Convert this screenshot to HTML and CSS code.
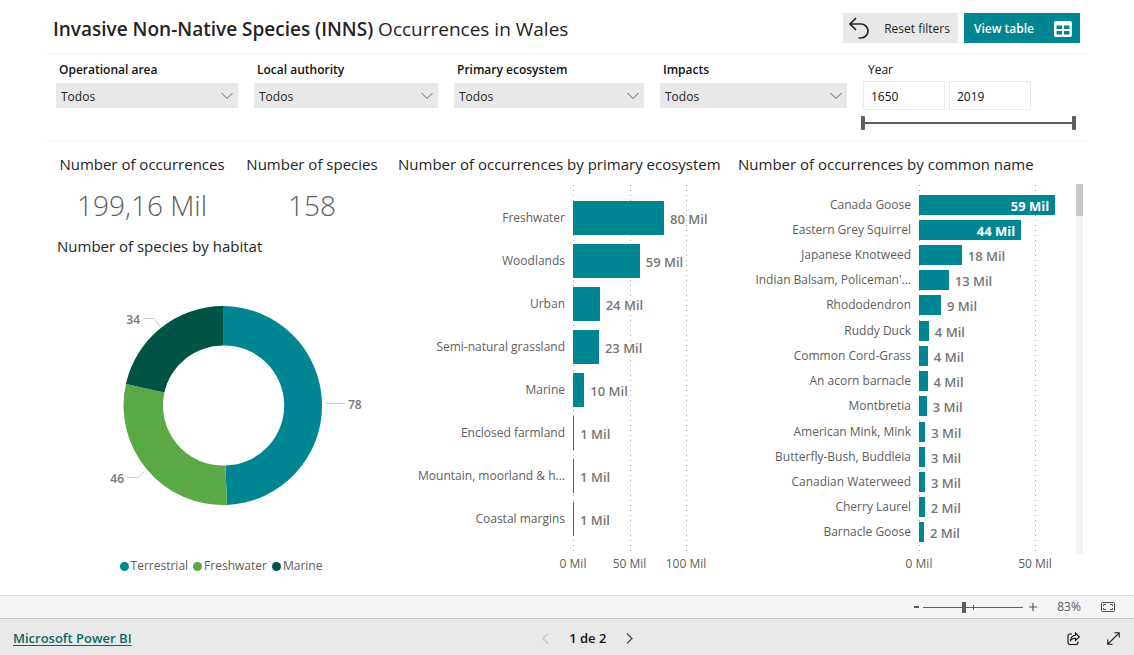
FILE: index.html
```html
<!DOCTYPE html>
<html lang="en">
<head>
<meta charset="utf-8">
<title>INNS Occurrences in Wales</title>
<link rel="stylesheet" href="styles.css">
</head>
<body>
<main class="report">
  <header class="header">
    <h1 class="title"><b>Invasive Non-Native Species (INNS)</b> Occurrences in Wales</h1>
    <button class="btn btn-reset" type="button">
      <svg width="22" height="24" viewBox="0 0 22 24" fill="none" stroke="#252423" stroke-width="1.7"><path d="M8 1 2 7l6 6M2 7h11a6.500 6.500 0 0 1 0 14H10.500"/></svg>
      Reset filters
    </button>
    <button class="btn btn-table" type="button">
      View table
      <svg width="18" height="16" viewBox="0 0 18 16"><rect width="18" height="16" rx="2" fill="#fff"/><path d="M2.500 4.500h5.500v3.500H2.500zM10 4.500h5.500v3.500H10zM2.500 10h5.500v3.500H2.500zM10 10h5.500v3.500H10z" fill="#008593"/></svg>
    </button>
  </header>

  <section class="filters">
    <div class="filter">
      <label for="area">Operational area</label>
      <div class="select"><select id="area"><option>Todos</option></select><svg class="chev warm" width="12" height="8" viewBox="0 0 12 8"><path d="M.5 1 6 6.500 11.500 1"/></svg></div>
    </div>
    <div class="filter">
      <label for="authority">Local authority</label>
      <div class="select"><select id="authority"><option>Todos</option></select><svg class="chev warm" width="12" height="8" viewBox="0 0 12 8"><path d="M.5 1 6 6.500 11.500 1"/></svg></div>
    </div>
    <div class="filter">
      <label for="ecosystem">Primary ecosystem</label>
      <div class="select"><select id="ecosystem"><option>Todos</option></select><svg class="chev" width="12" height="8" viewBox="0 0 12 8"><path d="M.5 1 6 6.500 11.500 1"/></svg></div>
    </div>
    <div class="filter">
      <label for="impacts">Impacts</label>
      <div class="select"><select id="impacts"><option>Todos</option></select><svg class="chev" width="12" height="8" viewBox="0 0 12 8"><path d="M.5 1 6 6.500 11.500 1"/></svg></div>
    </div>
    <div class="year">
      <label for="from">Year</label>
      <div class="year-inputs">
        <input id="from" type="text" value="1650">
        <input type="text" value="2019" aria-label="End year">
      </div>
      <div class="range">
        <input type="range" min="1650" max="2019" value="1650" aria-label="From">
        <input type="range" min="1650" max="2019" value="2019" aria-label="To">
      </div>
    </div>
  </section>

  <section class="visuals">
    <div class="summary">
      <div class="kpis">
        <div class="kpi"><h2>Number of occurrences</h2><p>199,16 Mil</p></div>
        <div class="kpi"><h2>Number of species</h2><p>158</p></div>
      </div>
      <h2 class="habitat-title">Number of species by habitat</h2>
      <svg class="donut" viewBox="0 0 344 280" role="img" aria-label="Number of species by habitat">
        <path fill="#008593" d="M177 36A99.500 99.500 0 0 1 181 234.900L179.400 195.500A60 60 0 0 0 177 75.500Z"/>
        <path fill="#5aa846" d="M181 234.900A99.500 99.500 0 0 1 79.900 113.900L118.400 122.500A60 60 0 0 0 179.400 195.500Z"/>
        <path fill="#005446" d="M79.900 113.900A99.500 99.500 0 0 1 177 36V75.500A60 60 0 0 0 118.400 122.500Z"/>
        <path class="leader" d="M97 48.500h11l6 8M279 133.500h20M81 207.500h11l7-7"/>
        <text x="94" y="54" text-anchor="end">34</text>
        <text x="302" y="139">78</text>
        <text x="78" y="213" text-anchor="end">46</text>
      </svg>
      <ul class="legend">
        <li><i class="dot teal"></i>Terrestrial</li>
        <li><i class="dot green"></i>Freshwater</li>
        <li><i class="dot dark"></i>Marine</li>
      </ul>
    </div>

    <div class="chart chart-eco">
      <h2>Number of occurrences by primary ecosystem</h2>
      <div class="plot">
        <div class="lines"><i></i><i></i><i></i></div>
        <div class="rows">
          <div class="row"><span class="name">Freshwater</span><span class="track"><i class="bar" style="width:58%"></i><b>80 Mil</b></span></div>
          <div class="row"><span class="name">Woodlands</span><span class="track"><i class="bar" style="width:42.500%"></i><b>59 Mil</b></span></div>
          <div class="row"><span class="name">Urban</span><span class="track"><i class="bar" style="width:17%"></i><b>24 Mil</b></span></div>
          <div class="row"><span class="name">Semi-natural grassland</span><span class="track"><i class="bar" style="width:16.500%"></i><b>23 Mil</b></span></div>
          <div class="row"><span class="name">Marine</span><span class="track"><i class="bar" style="width:7.200%"></i><b>10 Mil</b></span></div>
          <div class="row"><span class="name">Enclosed farmland</span><span class="track"><i class="bar" style="width:.8%"></i><b>1 Mil</b></span></div>
          <div class="row"><span class="name">Mountain, moorland &amp; h...</span><span class="track"><i class="bar" style="width:.7%"></i><b>1 Mil</b></span></div>
          <div class="row"><span class="name">Coastal margins</span><span class="track"><i class="bar" style="width:.6%"></i><b>1 Mil</b></span></div>
        </div>
      </div>
      <div class="axis"><span>0 Mil</span><span>50 Mil</span><span>100 Mil</span></div>
    </div>

    <div class="chart chart-name">
      <h2>Number of occurrences by common name</h2>
      <div class="scroller">
        <div class="plot">
          <div class="lines"><i></i><i></i></div>
          <div class="rows">
            <div class="row"><span class="name">Canada Goose</span><span class="track"><i class="bar" style="width:94%"><b>59 Mil</b></i></span></div>
            <div class="row"><span class="name">Eastern Grey Squirrel</span><span class="track"><i class="bar" style="width:70.500%"><b>44 Mil</b></i></span></div>
            <div class="row"><span class="name">Japanese Knotweed</span><span class="track"><i class="bar" style="width:29.500%"></i><b>18 Mil</b></span></div>
            <div class="row"><span class="name">Indian Balsam, Policeman'...</span><span class="track"><i class="bar" style="width:20.500%"></i><b>13 Mil</b></span></div>
            <div class="row"><span class="name">Rhododendron</span><span class="track"><i class="bar" style="width:15.200%"></i><b>9 Mil</b></span></div>
            <div class="row"><span class="name">Ruddy Duck</span><span class="track"><i class="bar" style="width:6.800%"></i><b>4 Mil</b></span></div>
            <div class="row"><span class="name">Common Cord-Grass</span><span class="track"><i class="bar" style="width:6.100%"></i><b>4 Mil</b></span></div>
            <div class="row"><span class="name">An acorn barnacle</span><span class="track"><i class="bar" style="width:5.900%"></i><b>4 Mil</b></span></div>
            <div class="row"><span class="name">Montbretia</span><span class="track"><i class="bar" style="width:5.300%"></i><b>3 Mil</b></span></div>
            <div class="row"><span class="name">American Mink, Mink</span><span class="track"><i class="bar" style="width:4.300%"></i><b>3 Mil</b></span></div>
            <div class="row"><span class="name">Butterfly-Bush, Buddleia</span><span class="track"><i class="bar" style="width:4.200%"></i><b>3 Mil</b></span></div>
            <div class="row"><span class="name">Canadian Waterweed</span><span class="track"><i class="bar" style="width:4.100%"></i><b>3 Mil</b></span></div>
            <div class="row"><span class="name">Cherry Laurel</span><span class="track"><i class="bar" style="width:4%"></i><b>2 Mil</b></span></div>
            <div class="row"><span class="name">Barnacle Goose</span><span class="track"><i class="bar" style="width:3.400%"></i><b>2 Mil</b></span></div>
          </div>
        </div>
        <div class="scrollbar"><i></i></div>
      </div>
      <div class="axis"><span>0 Mil</span><span>50 Mil</span></div>
    </div>
  </section>
</main>

<div class="zoombar">
  <button type="button" aria-label="Zoom out"><svg width="5" height="10" viewBox="0 0 5 10"><path d="M0 5h5" stroke="#555" stroke-width="2"/></svg></button>
  <input type="range" min="0" max="100" value="41" aria-label="Zoom">
  <button type="button" aria-label="Zoom in"><svg width="8" height="8" viewBox="0 0 8 8"><path d="M0 4h8M4 0v8" stroke="#555" stroke-width="1.200"/></svg></button>
  <span class="pct">83%</span>
  <button type="button" aria-label="Fit to page"><svg width="14" height="10" viewBox="0 0 14 10" fill="none" stroke="#555"><rect x=".5" y=".5" width="13" height="9" rx="1"/><path d="M5 2.500H2.500V4M2.500 6v1.500H5M9 2.500h2.500V4M11.500 6v1.500H9"/></svg></button>
</div>

<footer class="footer">
  <div><a href="#">Microsoft Power BI</a></div>
  <nav class="pager">
    <button type="button" disabled aria-label="Previous page"><svg width="7" height="11" viewBox="0 0 7 11" fill="none" stroke="#c4c4c4" stroke-width="1.200"><path d="M6 .5 1 5.500l5 5"/></svg></button>
    <span>1 de 2</span>
    <button type="button" aria-label="Next page"><svg width="7" height="11" viewBox="0 0 7 11" fill="none" stroke="#444" stroke-width="1.200"><path d="m1 .5 5 5-5 5"/></svg></button>
  </nav>
  <div class="actions">
    <button type="button" aria-label="Share"><svg width="13" height="13" viewBox="0 0 13 13" fill="none" stroke="#111" stroke-width="1.100"><path d="M5 2H3Q1 2 1 4v6.500q0 2 2 2h6q2 0 2-2V9.500"/><path d="M8.500 1v2.300C5.500 3.500 4 5 3.500 8.500 5 6.800 6.500 6.300 8.500 6.300V8.500l3.800-3.700z"/></svg></button>
    <button type="button" aria-label="Full screen"><svg width="13" height="13" viewBox="0 0 13 13" fill="none" stroke="#111" stroke-width="1.100"><path d="M.8 12.200 12.200.8M7.500.8h4.700v4.700M.8 7.500v4.700h4.700"/></svg></button>
  </div>
</footer>
</body>
</html>
```

FILE: styles.css
```css
* { box-sizing: border-box; }
body {
  margin: 0;
  min-height: 100vh;
  display: flex;
  flex-direction: column;
  background: #fff;
  color: #252423;
  font: 12px/16px "Open Sans", "Noto Sans", sans-serif;
}
h1, h2, p, ul { margin: 0; padding: 0; font-weight: 400; }
button, input, select { font: inherit; color: inherit; margin: 0; }
button { border: 0; background: none; padding: 0; display: flex; align-items: center; }
svg { display: block; flex: none; }

.report { flex: 1; padding: 0 46px; }

.header {
  display: flex;
  align-items: center;
  gap: 6px;
  height: 54px;
  padding: 2px 8px 0 7px;
  border-bottom: 1px solid #f0f0f0;
}
.title { flex: 1; font-size: 19px; line-height: 26px; padding-top: 2px; }
.title b { font-weight: 600; }
.btn { height: 30px; padding-top: 2px; }
.btn-reset { background: #e8e8e8; padding-left: 5px; padding-right: 8px; gap: 14px; }
.btn-table { background: #008593; color: #fff; font-weight: 600; padding-left: 10px; padding-right: 8px; gap: 20px; }

.filters {
  display: grid;
  grid-template-columns: 198fr 200fr 206fr 203fr 225fr;
  padding: 8px 0 10px 10px;
  border-bottom: 1px solid #f0f0f0;
}
.filter { padding-right: 16px; }
.filter label, .year label { display: block; color: #111; font-weight: 600; padding-left: 3px; margin-bottom: 5px; }
.year label { padding-left: 5px; margin-bottom: 3px; font-weight: 400; }
.select { display: grid; align-items: center; background: #e8e8e8; }
.select > * { grid-area: 1 / 1; }
.select select {
  appearance: none;
  width: 100%;
  height: 25px;
  border: 0;
  border-radius: 0;
  background: transparent;
  padding: 2px 5px 0;
}
.chev { justify-self: end; margin-right: 5px; pointer-events: none; fill: none; stroke: #47606b; }
.chev.warm { stroke: #8a5a44; }
.year-inputs { display: flex; gap: 4px; }
.year-inputs input { width: 82px; height: 29px; border: 1px solid #eaeaea; padding: 2px 7px 0; color: #111; }
.range { display: grid; width: 215px; max-width: 100%; margin-top: 6px; margin-left: -2px; background: linear-gradient(#605e5c, #605e5c) center / 100% 2px no-repeat; }
.range input {
  grid-area: 1 / 1;
  appearance: none;
  width: 100%;
  height: 14px;
  background: none;
  pointer-events: none;
}
.range input::-webkit-slider-thumb {
  appearance: none;
  width: 4px;
  height: 14px;
  border-radius: 1px;
  background: #605e5c;
  pointer-events: auto;
}

.visuals { display: grid; grid-template-columns: 344fr 340fr 358fr; padding-top: 13px; }
.visuals h2 { font-size: 15px; line-height: 20px; white-space: nowrap; }

.kpis { display: grid; grid-template-columns: 192fr 148fr 4fr; text-align: center; }
.kpi p { font-size: 28px; line-height: 40px; font-weight: 300; color: #605e5c; margin-top: 11px; }
.habitat-title { padding-left: 11px; margin-top: 11px; }
.donut { width: 100%; margin-top: 14px; font-size: 12px; font-weight: 600; }
.donut text { fill: #777; }
.leader { fill: none; stroke: #c8c8c8; }
.legend { display: flex; justify-content: center; gap: 5px; list-style: none; color: #605e5c; margin-top: 8px; padding-left: 6px; }
.legend li { display: flex; align-items: center; gap: 2px; }
.dot { width: 9px; height: 9px; border-radius: 50%; }
.teal { background: #008593; }
.green { background: #5aa846; }
.dark { background: #005446; }

.chart { color: #605e5c; }
.chart h2 { color: #252423; padding-left: 8px; margin-bottom: 11px; }
.chart-eco { --label: 183px; --tick: 36%; --half: -18%; --bar: 34px; }
.chart-name { --label: 189px; --tick: 80%; --half: -40%; --bar: 20px; }
.scroller { display: flex; justify-content: space-between; margin-right: 5px; }
.scroller .plot { flex: 1; margin-right: 12px; }
.plot { display: grid; height: 369px; }
.plot > * { grid-area: 1 / 1; }
.lines { display: flex; margin-left: var(--label); }
.lines i {
  flex: none;
  width: var(--tick);
  background: linear-gradient(#aaa 1px, transparent 1px) left top / 1px 5px repeat-y;
}
.lines i:last-child { width: 1px; }
.rows { display: flex; flex-direction: column; padding: 11px 0 14px; }
.chart-name .rows { padding: 7px 0 9px; }
.row { flex: 1; display: grid; grid-template-columns: var(--label) 1fr; align-items: center; }
.name { text-align: right; padding-right: 8px; white-space: nowrap; }
.track { display: flex; align-items: center; gap: 6px; }
.track b { font-size: 13px; font-weight: 600; color: #777; white-space: nowrap; padding-top: 2px; }
.bar { flex: none; height: var(--bar); background: #008593; display: flex; align-items: center; justify-content: flex-end; font-style: normal; }
.bar b { padding-right: 6px; }
.track .bar b { color: #fff; font-weight: 700; }
.axis { display: flex; margin-left: var(--label); margin-top: 2px; }
.chart-name .axis { margin-right: 24px; }
.axis span { flex: none; width: var(--tick); text-align: center; white-space: nowrap; }
.axis span:first-child { margin-left: var(--half); }
.scrollbar { width: 7px; background: #f3f3f3; margin-top: -1px; }
.scrollbar i { display: block; height: 32px; background: #c8c8c8; }

.zoombar {
  display: flex;
  align-items: center;
  justify-content: flex-end;
  height: 23px;
  padding-right: 19px;
  background: #f4f4f4;
  border-top: 1px solid #dedede;
  color: #605e5c;
}
.zoombar input {
  appearance: none;
  width: 100px;
  height: 12px;
  margin: 0 6px 0 4px;
  background:
    linear-gradient(#605e5c, #605e5c) 50px center / 1px 5px no-repeat,
    linear-gradient(#605e5c, #605e5c) center / 100% 1px no-repeat;
}
.zoombar input::-webkit-slider-thumb { appearance: none; width: 4px; height: 11px; background: #605e5c; }
.pct { width: 64px; text-align: center; }

.footer {
  display: grid;
  grid-template-columns: 546fr auto 502fr;
  align-items: center;
  height: 37px;
  padding: 2px 14px 0 13px;
  background: #e9e9e9;
  border-top: 1px solid #c8c8c8;
}
.footer a { color: #0b6a60; font-size: 13px; font-weight: 600; text-underline-offset: 2px; }
.pager { display: flex; align-items: center; gap: 20px; color: #111; font-size: 13px; font-weight: 600; }
.actions { display: flex; justify-content: flex-end; gap: 27px; }
```
